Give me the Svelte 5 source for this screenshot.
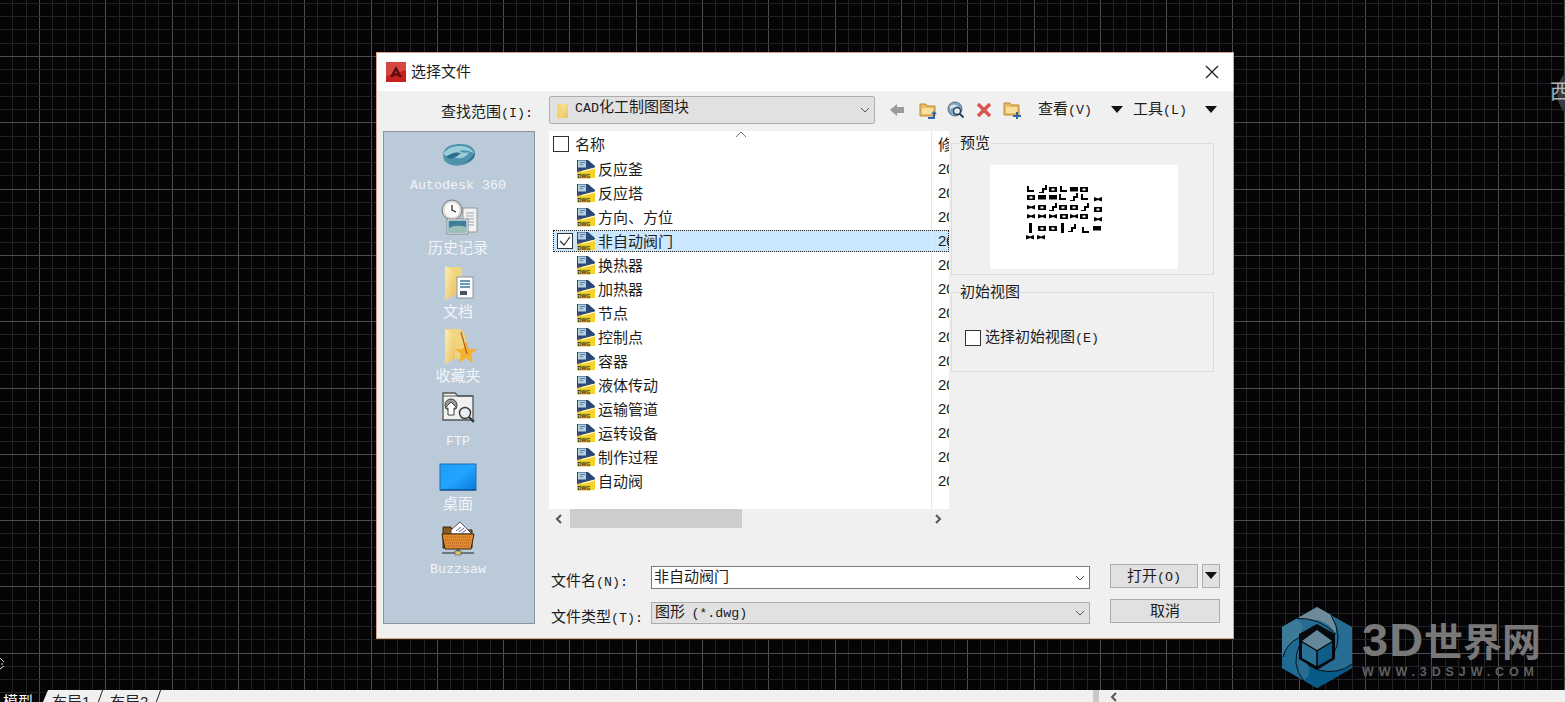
<script>
  const W = 1565;
  const H = 702;
  const STEP = 13.26;

  // cad grid, every 5th line brighter. major lines at x=39, y=56
  const vLines = [];
  for (let i = -2; i * STEP < W; i++) {
    vLines.push({ p: Math.round(39 + i * STEP) + 0.5, major: i % 5 === 0 });
  }
  const hLines = [];
  for (let i = -4; 56 + i * STEP < H; i++) {
    hLines.push({ p: Math.round(56 + i * STEP) + 0.5, major: i % 5 === 0 });
  }

  const files = ['反应釜', '反应塔', '方向、方位', '非自动阀门', '换热器', '加热器', '节点', '控制点', '容器', '液体传动', '运输管道', '运转设备', '制作过程', '自动阀'];

  // little blocks in the dwg preview
  const glyphs = {
    v: (x, y) => `M${x - 4} ${y - 2}l4 1.500l4-1.500v4.500l-4-1.500l-4 1.500z`,
    b: (x, y) => `M${x - 4} ${y - 2}h8v4.500h-8z`,
    o: (x, y) => `M${x - 4} ${y - 2}h8v5h-8zM${x - 1.500} ${y - 0.500}v2h3v-2z`,
    l: (x, y) => `M${x - 4} ${y - 3}h2v4h5v2h-7z`,
    t: (x, y) => `M${x - 1} ${y - 5}h3v10h-3z`,
    r: (x, y) => `M${x - 4} ${y + 3}h3v-4h3v-3h2v5h-3v3h-5z`
  };
  const blocks = [
    ['l', 41, 24], ['r', 53, 24], ['o', 63, 24], ['l', 74, 24], ['b', 84, 24], ['o', 94, 24],
    ['o', 41, 32], ['b', 52, 32], ['b', 63, 32], ['l', 73, 32], ['r', 84, 32], ['l', 95, 32], ['v', 108, 34],
    ['v', 41, 42], ['o', 52, 42], ['r', 63, 42], ['o', 73, 42], ['o', 84, 42], ['r', 95, 42], ['o', 108, 44],
    ['v', 41, 51], ['v', 52, 51], ['v', 63, 51], ['o', 74, 51], ['v', 84, 51], ['o', 94, 51], ['v', 108, 54],
    ['t', 40, 63], ['o', 52, 63], ['o', 63, 63], ['t', 72, 63], ['r', 82, 63], ['l', 96, 65], ['b', 107, 63],
    ['v', 40, 72], ['v', 51, 72]
  ];
  const previewPath = blocks.map(([t, x, y]) => glyphs[t](x, y)).join('');
</script>

<svg width="0" height="0" class="defs" aria-hidden="true">
  <defs>
    <linearGradient id="fold" x1="0" y1="0" x2="1" y2="1">
      <stop offset="0" stop-color="#fdf0b0" />
      <stop offset="1" stop-color="#e8c060" />
    </linearGradient>
    <linearGradient id="desk" x1="0" y1="0" x2="1" y2="1">
      <stop offset="0" stop-color="#1c9cf8" />
      <stop offset="0.5" stop-color="#22a4ff" />
      <stop offset="1" stop-color="#0a78dc" />
    </linearGradient>
    <symbol id="dwg" viewBox="0 0 19 20">
      <path d="M0 1h11l7 6v5L0 14z" fill="#2c4a78" />
      <path d="M1 1.500h8v7H1z" fill="#b4cde0" />
      <path d="M3 3.500h5M3 5.500h3" stroke="#5f7f9c" />
      <path d="M0 13L18 8.500V19H0z" fill="#f6d32a" />
      <path d="M5 12.500L18 9" stroke="#fff" stroke-width="1" />
      <rect x="0" y="14" width="13" height="5.500" fill="#e8c31e" />
      <text x="0.500" y="19" font-size="5.200" font-weight="700" font-family="Liberation Sans, sans-serif" fill="#333">DWG</text>
    </symbol>
    <symbol id="chev" viewBox="0 0 10 6">
      <path d="M1 1l4 4l4-4" fill="none" stroke="#555" stroke-width="1" />
    </symbol>
    <symbol id="tri" viewBox="0 0 12 7">
      <path d="M0 0h12L6 7z" fill="#111" />
    </symbol>
  </defs>
</svg>

<main class="desktop">
  <svg class="grid" width={W} height={H}>
    {#each vLines as l}
      <line x1={l.p} x2={l.p} y1="0" y2={H} stroke={l.major ? '#4c4c4c' : '#232326'} />
    {/each}
    {#each hLines as l}
      <line y1={l.p} y2={l.p} x1="0" x2={W} stroke={l.major ? '#4c4c4c' : '#232326'} />
    {/each}
  </svg>

  <div class="viewcube"><span>西</span></div>
  <svg class="ucs" width="8" height="16"><path d="M0 2l4 4M0 13l4-3M1 8h2" stroke="#ddd" fill="none" /></svg>

  <section class="dialog">
    <header class="titlebar">
      <svg width="20" height="20" viewBox="0 0 20 20">
        <rect width="20" height="20" fill="#c8201f" />
        <path d="M0 0h20v8L0 14z" fill="#e0605a" opacity=".6" />
        <path d="M10 4l6 11h-3.400l-.7-1.600H8.100L7.400 15H4zM10 8.500L8.900 11.500h2.200z" fill="#5c0d0d" fill-rule="evenodd" />
      </svg>
      <h1>选择文件</h1>
      <svg class="close" width="14" height="14" viewBox="0 0 14 14"><path d="M1 1l12 12M13 1L1 13" stroke="#222" stroke-width="1.300" /></svg>
    </header>

    <div class="lookin">
      <label class="lookin-label">查找范围<span class="lat">(I):</span></label>
      <div class="combo top">
        <svg width="13" height="17" viewBox="0 0 13 17"><path d="M1 2l5-1v1h6v14H5l-4 1z" fill="url(#fold)" /><path d="M1 2l5 1v13l-5 1z" fill="#f6d56e" /></svg>
        <span class="combo-text"><span class="lat">CAD</span>化工制图图块</span>
        <svg class="chev" width="10" height="6"><use href="#chev" /></svg>
      </div>
      <div class="tools">
        <svg width="16" height="14" viewBox="0 0 16 14"><path d="M1 7l7-6v3h7v6H8v3z" fill="#9b9b9b" /></svg>
        <svg width="18" height="18" viewBox="0 0 18 18"><path d="M1 3h6l1 2h8v10H1z" fill="#e9bb62" stroke="#b98b3a" /><path d="M3 7h11v6H3z" fill="#f7df9e" /><path d="M9 16h5v-3h-2l3-3l3 3h-2v5H9z" fill="#2f64a8" /></svg>
        <svg width="18" height="18" viewBox="0 0 18 18"><circle cx="8" cy="8" r="7" fill="#7ea6bd" stroke="#56707f" /><path d="M3 5q4-3 8 0q-1 3-4 2t-4 3z" fill="#d8e4ea" /><circle cx="10" cy="10" r="3.500" fill="#e8f0f4" stroke="#253e63" stroke-width="1.400" /><path d="M12.500 12.500l4 4" stroke="#253e63" stroke-width="2" /></svg>
        <svg width="16" height="16" viewBox="0 0 16 16"><path d="M2 2l12 12M14 2L2 14" stroke="#d9534f" stroke-width="3.400" /></svg>
        <svg width="18" height="18" viewBox="0 0 18 18"><path d="M1 2h6l1 2h8v10H1z" fill="#e9bb62" stroke="#b98b3a" /><path d="M3 6h11v6H3z" fill="#f7df9e" /><path d="M13 11h2v3h3v2h-3v2h-2v-2h-3v-2h3z" fill="#2f64a8" /></svg>
        <span class="tool-text">查看<span class="lat">(V)</span></span>
        <svg width="12" height="7"><use href="#tri" /></svg>
        <span class="tool-text">工具<span class="lat">(L)</span></span>
        <svg width="12" height="7"><use href="#tri" /></svg>
      </div>
    </div>

    <div class="body">
      <nav class="places">
        <div class="place">
          <svg width="40" height="40" viewBox="0 0 40 40">
            <path d="M5 20q1-10 15-11q14-1 17 8q1 8-9 12q-12 4-19-1q-4-3-4-8z" fill="#4f93ac" />
            <path d="M5 19q6-9 19-8q9 1 12 7q-8-4-15-2q5 3 10 1q-3 7-12 6q-9-1-14-4z" fill="#9accda" />
            <path d="M8 22q7-6 15-4q-3 3-7 5t-8-1z" fill="#2c6f8c" />
            <path d="M20 29q11-1 17-11q0 9-17 11z" fill="#2c6f8c" />
          </svg>
          <span class="lat">Autodesk 360</span>
        </div>
        <div class="place">
          <svg width="40" height="40" viewBox="0 0 40 40">
            <rect x="25" y="9" width="14" height="24" fill="#f2f2f2" stroke="#999" />
            <path d="M28 14h8M28 17h8M28 20h8M28 23h8M28 26h8" stroke="#9aa" />
            <circle cx="14" cy="11" r="10" fill="#d9d9d9" stroke="#777" />
            <circle cx="14" cy="11" r="7.500" fill="#fafafa" />
            <path d="M14 6v5l4 2" fill="none" stroke="#333" stroke-width="1.300" />
            <rect x="9" y="20" width="21" height="15" fill="#fff" stroke="#888" />
            <rect x="10.500" y="21.500" width="18" height="12" fill="#3f7d9c" />
            <path d="M10.500 29q8-4 18-1v5.500h-18z" fill="#9cc0b8" />
          </svg>
          <span>历史记录</span>
        </div>
        <div class="place">
          <svg width="40" height="40" viewBox="0 0 40 40">
            <path d="M7 4h16l1 3v22H7z" fill="#f0d47e" />
            <path d="M7 3l10 5v24l-10 5z" fill="url(#fold)" />
            <rect x="19" y="14" width="16" height="21" fill="#fff" stroke="#8a949c" />
            <path d="M22 18h10M22 21h10M22 24h10" stroke="#3c7a9c" stroke-width="1.400" />
            <path d="M22 28h7v4h-7z" fill="#456" />
          </svg>
          <span>文档</span>
        </div>
        <div class="place">
          <svg width="40" height="40" viewBox="0 0 40 40">
            <path d="M7 2h16l4 6l4 24H7z" fill="#f0d47e" />
            <path d="M7 2l10 5v25l-10 5z" fill="url(#fold)" />
            <path d="M28 14l3 8h8l-6 5l2 9l-7-5l-7 5l2-9l-6-5h8z" fill="#f3b32f" />
            <path d="M23 5l6 22" stroke="#b35a26" stroke-width="1.200" />
          </svg>
          <span>收藏夹</span>
        </div>
        <div class="place">
          <svg width="40" height="40" viewBox="0 -2 40 40">
            <path d="M5 0h12l3 3h15v24H5z" fill="#eef0f2" stroke="#555" stroke-width="1.300" />
            <path d="M5 3h30" stroke="#555" />
            <circle cx="13" cy="12" r="6" fill="#999" stroke="#444" />
            <path d="M13 9l6 6h-3v7h-6v-7H7z" fill="#fff" stroke="#444" />
            <circle cx="27" cy="20" r="5.500" fill="#e7eef4" stroke="#333" stroke-width="1.400" />
            <path d="M31 24l5 5" stroke="#333" stroke-width="2.200" />
          </svg>
          <span class="lat">FTP</span>
        </div>
        <div class="place">
          <svg width="40" height="40" viewBox="0 0 40 40">
            <rect x="2" y="9" width="36" height="26" fill="url(#desk)" stroke="#1d6eb4" />
            <path d="M2 35h36" stroke="#0a3f7c" />
          </svg>
          <span>桌面</span>
        </div>
        <div class="place">
          <svg width="40" height="40" viewBox="0 0 40 40">
            <path d="M5 8h8l1 3h20v18H5z" fill="#8a5a20" stroke="#3c2408" />
            <path d="M13 11l9-8l12 12H13z" fill="#fff" stroke="#555" />
            <path d="M18 12l5-4M21 13l5-4M24 14l4-3" stroke="#66a" />
            <path d="M4 15h32l-3 15H7z" fill="#e08a32" stroke="#3c2408" />
            <path d="M7 18h26M7 21h26M8 24h24M8 27h24" stroke="#a85c1a" stroke-dasharray="1 1" />
            <path d="M20 30v3" stroke="#555" stroke-width="3" />
            <path d="M4 34h32" stroke="#222" />
            <rect x="17" y="32" width="6" height="4" fill="#d8c860" stroke="#555" stroke-width=".6" />
          </svg>
          <span class="lat">Buzzsaw</span>
        </div>
      </nav>

      <div class="main">
        <div class="browser">
          <div class="list">
            <i class="divider"></i>
            <svg class="sort" width="10" height="5"><path d="M0 5l5-5l5 5" fill="none" stroke="#777" /></svg>
            <div class="head">
              <span class="box"></span>
              <span>名称</span>
              <span class="date">修</span>
            </div>
            {#each files as name, i}
              <div class="row" class:selected={i === 3}>
                <span class="slot">
                  {#if i === 3}
                    <span class="box">
                      <svg width="14" height="14" viewBox="0 0 14 14"><path d="M2 7l4 4l6-8" fill="none" stroke="#333" stroke-width="1.200" /></svg>
                    </span>
                  {/if}
                </span>
                <svg width="19" height="20"><use href="#dwg" /></svg>
                <span class="name">{name}</span>
                <span class="date">20</span>
              </div>
            {/each}
          </div>

          <aside class="side">
            <fieldset class="group preview">
              <legend>预览</legend>
              <div class="thumb">
                <svg width="188" height="104"><path d={previewPath} fill="#000" fill-rule="evenodd" /></svg>
              </div>
            </fieldset>
            <fieldset class="group initial">
              <legend>初始视图</legend>
              <label class="check"><span class="box"></span><span>选择初始视图<span class="lat">(E)</span></span></label>
            </fieldset>
          </aside>
        </div>

        <div class="hscroll">
          <svg class="arrow" width="8" height="10"><path d="M6 1L2 5l4 4" fill="none" stroke="#555" stroke-width="2" /></svg>
          <div class="track"><div class="thumbbar"></div></div>
          <svg class="arrow" width="8" height="10"><path d="M2 1l4 4l-4 4" fill="none" stroke="#555" stroke-width="2" /></svg>
        </div>

        <div class="form">
          <label class="flabel">文件名<span class="lat">(N):</span></label>
          <div class="field">
            <span>非自动阀门</span>
            <svg class="chev" width="10" height="6"><use href="#chev" /></svg>
          </div>
          <div class="open-wrap">
            <button class="btn open">打开<span class="lat">(O)</span></button>
            <button class="btn drop" aria-label="打开选项"><svg width="12" height="7"><use href="#tri" /></svg></button>
          </div>

          <label class="flabel">文件类型<span class="lat">(T):</span></label>
          <div class="field gray">
            <span>图形 <span class="lat">(*.dwg)</span></span>
            <svg class="chev" width="10" height="6"><use href="#chev" /></svg>
          </div>
          <button class="btn cancel">取消</button>
        </div>
      </div>
    </div>
  </section>

  <div class="watermark">
    <svg width="70" height="81" viewBox="0 0 70 81">
      <path d="M35 0l35 20v41L35 81L0 61V20z" fill="#276c92" />
      <path d="M35 0L49 8Q55 18 54 27Q46 15 36 13Q25 12 15 11.500z" fill="#6f8b9b" />
      <path d="M0 20L15 11.500L21 19L18 30Q6 33 1 50H0z" fill="#3d7a98" />
      <path d="M0 50Q4 37 18 30V53Q14 65 22 73.500L0 61z" fill="#1f6a90" />
      <path d="M70 57V61L35 81L22 73.500Q30 68 26 58Q30 62 36 63Q56 68 70 57z" fill="#075a88" />
      <path d="M15 11.500Q36 10 54 27M49 8Q62 30 51 48M70 57Q56 68 36 63L26 58M22 74Q8 58 18 37M1 50Q4 37 18 30" fill="none" stroke="#05101a" stroke-width="1" />
      <path d="M35 17l18 10v25L35 63L17 52V27z" fill="#05090d" />
      <path d="M35 23l15 11l-15 9l-15-9z" fill="#64889a" />
      <path d="M20 35.500l14.200 8.500v15L20 51z" fill="#2a7396" />
      <path d="M50 35.500l-14.200 8.500v15L50 51z" fill="#0f5c88" />
    </svg>
    <div class="mark-text">
      <strong><span class="mark-latin">3D</span>世界网</strong>
      <small>WWW.3DSJW.COM</small>
    </div>
  </div>

  <footer class="tabs">
    <span class="tab model">模型</span>
    <div class="tabstrip">
      <span class="tab">布局<span>1</span></span><i class="slash"></i>
      <span class="tab">布局<span>2</span></span><i class="slash"></i>
      <i class="grip"></i>
      <svg class="arrow" width="8" height="10"><path d="M6 1L2 5l4 4" fill="none" stroke="#555" stroke-width="2" /></svg>
    </div>
  </footer>
</main>

<style>
  :global(body) {
    margin: 0;
    background: #050507;
    overflow: hidden;
  }

  .defs { position: absolute; }

  .desktop {
    position: relative;
    width: 1565px;
    height: 702px;
    overflow: hidden;
    background: #050507;
    font-family: "Noto Sans CJK SC", sans-serif;
    font-size: 15px;
    color: #1c1c1c;
  }

  .lat {
    font-family: "Liberation Mono", monospace;
    font-size: 13.33px;
  }

  .grid { position: absolute; left: 0; top: 0; }

  .viewcube {
    position: absolute;
    left: 1557px;
    top: 58px;
    width: 90px;
    height: 70px;
    border-radius: 50%;
    background: #3a3a3e;
  }
  .viewcube span {
    position: absolute;
    left: -7px;
    top: 21px;
    color: #b5b5b5;
    font-size: 20px;
    line-height: 24px;
  }

  .ucs { position: absolute; left: 0; top: 656px; }

  /* dialog */
  .dialog {
    position: absolute;
    left: 376px;
    top: 52px;
    width: 858px;
    height: 587px;
    box-sizing: border-box;
    border: 1px solid #d9a27e;
    background: #f0f0f0;
    display: flex;
    flex-direction: column;
  }

  .titlebar {
    height: 38px;
    flex: none;
    background: #fff;
    display: flex;
    align-items: center;
    padding: 0 14px 0 9px;
    gap: 5px;
  }
  .titlebar h1 {
    margin: -2px 0 0;
    font-size: 15px;
    font-weight: 400;
    line-height: 20px;
  }
  .close { margin-left: auto; }

  .lookin {
    height: 40px;
    flex: none;
    display: flex;
    align-items: flex-start;
  }
  .lookin-label {
    width: 156px;
    text-align: right;
    margin-top: 10px;
    margin-right: 1px;
    line-height: 20px;
    white-space: nowrap;
  }
  .combo.top {
    width: 326px;
    height: 28px;
    margin: 5px 0 0 15px;
    box-sizing: border-box;
    background: #e1e1e1;
    border: 1px solid #adadad;
    border-radius: 2px;
    display: flex;
    align-items: center;
    padding: 0 4px 0 6px;
    gap: 6px;
  }
  .combo-text { line-height: 20px; margin-top: -5px; }
  .chev { margin-left: auto; flex: none; }

  .tools {
    margin: 7px 0 0 14px;
    height: 18px;
    display: grid;
    grid-template-columns: 30px 28px 29px 27px 35px 73px 22px 72px 20px;
    align-items: center;
    white-space: nowrap;
  }
  .tool-text { line-height: 20px; }

  .body {
    flex: 1;
    min-height: 0;
    display: flex;
    padding-left: 6px;
    gap: 14px;
  }

  /* left bar */
  .places {
    width: 152px;
    height: 493px;
    box-sizing: border-box;
    flex: none;
    border: 1px solid #8d959c;
    background: #bacad9;
    padding: 3px 2px 0 0;
    display: flex;
    flex-direction: column;
    color: #f2f5f8;
  }
  .place {
    height: 64px;
    flex: none;
    display: flex;
    flex-direction: column;
    align-items: center;
    line-height: 18px;
    white-space: nowrap;
  }
  .place svg { flex: none; }
  .place span { margin-top: -1px; }
  .place .lat { margin-top: 2px; }

  /* file list */
  .main { flex: 1; min-width: 0; }

  .browser { display: flex; height: 378px; }

  .list {
    position: relative;
    width: 400px;
    flex: none;
    background: #fff;
    overflow: hidden;
  }
  .divider {
    position: absolute;
    left: 382px;
    top: 0;
    bottom: 0;
    width: 1px;
    background: #e6e6e6;
  }
  .sort { position: absolute; left: 187px; top: 1px; }

  .head {
    height: 26px;
    display: flex;
    align-items: center;
    padding-left: 4px;
    gap: 6px;
    line-height: 20px;
  }
  .head .date { margin-left: auto; }

  .date {
    width: 11px;
    overflow: hidden;
    white-space: nowrap;
    flex: none;
    font-family: "Liberation Sans", sans-serif;
    line-height: 20px;
  }
  .head .date { font-family: inherit; }

  .box {
    width: 16px;
    height: 16px;
    box-sizing: border-box;
    flex: none;
    border: 1px solid #333;
    background: #fff;
    display: inline-flex;
    align-items: center;
    justify-content: center;
  }

  .row {
    height: 24px;
    margin-left: 4px;
    box-sizing: border-box;
    display: flex;
    align-items: center;
    line-height: 20px;
  }
  .row.selected {
    height: 22px;
    margin-top: 1px;
    margin-bottom: 1px;
    background: #cce8ff;
    outline: 1px dotted #222;
    outline-offset: -1px;
  }
  .slot {
    width: 24px;
    flex: none;
    padding-left: 4px;
    box-sizing: border-box;
    display: flex;
  }
  .name { margin-left: 2px; flex: 1; white-space: nowrap; }

  /* preview side */
  .side {
    flex: 1;
    padding: 2px 19px 0 2px;
    display: flex;
    flex-direction: column;
    gap: 7px;
    background: #f0f0f0;
  }
  .group {
    margin: 0;
    padding: 0;
    min-width: 0;
    border: 1px solid #dcdcdc;
    box-sizing: border-box;
  }
  .group legend {
    margin-left: 7px;
    padding: 0 1px;
    line-height: 20px;
    font-size: 15px;
    position: relative;
    top: -1px;
  }
  .preview { height: 142px; }
  .thumb {
    margin: 12px 0 0 38px;
    width: 188px;
    height: 104px;
    background: #fff;
  }
  .thumb svg { display: block; }
  .initial { height: 90px; }
  .check {
    display: flex;
    align-items: center;
    gap: 4px;
    margin: 24px 0 0 13px;
    line-height: 20px;
  }

  /* scrollbar */
  .hscroll {
    height: 19px;
    width: 400px;
    display: flex;
    align-items: center;
  }
  .arrow { flex: none; }
  .hscroll .arrow { margin: 0 6px; }
  .track { flex: 1; height: 100%; display: flex; margin-left: 1px; }
  .thumbbar { width: 172px; height: 100%; background: #cdcdcd; }
  .hscroll .arrow:last-child { margin: 0 7px 0 5px; }

  /* bottom form */
  .form {
    margin: 38px 0 0 2px;
    display: grid;
    grid-template-columns: 100px 439px 110px;
    grid-template-rows: 23px 22px;
    column-gap: 0;
    row-gap: 13px;
  }
  .flabel {
    line-height: 20px;
    margin-top: 4px;
    white-space: nowrap;
  }
  .field {
    box-sizing: border-box;
    height: 100%;
    border: 1px solid #7a7a7a;
    background: #fff;
    display: flex;
    align-items: center;
    padding: 0 4px 0 2px;
    line-height: 18px;
  }
  .field span { margin-top: -3px; }
  .field .lat { margin: 0; }
  .field.gray { background: #e1e1e1; border-color: #adadad; padding-left: 3px; }
  .field.gray span { margin-top: -1px; word-spacing: 3px; }
  .field.gray .lat { margin: 0; }

  .open-wrap {
    grid-column: 3;
    margin: -2px 0 0 20px;
    display: flex;
    justify-content: space-between;
    width: 110px;
    height: 24px;
  }
  .btn {
    box-sizing: border-box;
    background: #e1e1e1;
    border: 1px solid #adadad;
    border-radius: 0;
    padding: 0 0 2px;
    font: inherit;
    line-height: 20px;
    color: inherit;
  }
  .open { width: 88px; height: 24px; }
  .drop { width: 18px; height: 24px; display: flex; align-items: center; justify-content: center; }
  .cancel {
    width: 110px;
    height: 24px;
    margin: -3px 0 0 20px;
  }

  /* watermark over the drawing */
  .watermark {
    position: absolute;
    left: 1282px;
    top: 607px;
    display: flex;
    gap: 10px;
  }
  .mark-text {
    display: flex;
    flex-direction: column;
    padding-top: 10px;
  }
  .mark-text strong {
    font-size: 39px;
    line-height: 44px;
    color: #787878;
    font-weight: 700;
    white-space: nowrap;
  }
  .mark-latin {
    font-family: "Liberation Sans", sans-serif;
    font-size: 47px;
    letter-spacing: 1px;
  }
  .mark-text small {
    font-family: "Liberation Sans", sans-serif;
    font-size: 12.5px;
    font-weight: 700;
    letter-spacing: 4.9px;
    line-height: 16px;
    color: #5f5f5f;
    white-space: nowrap;
    margin-top: 2px;
  }

  /* layout tabs at the bottom */
  .tabs {
    position: absolute;
    left: 0;
    right: 0;
    bottom: 0;
    height: 12px;
    display: flex;
    line-height: 22px;
    overflow: hidden;
  }
  .tab { white-space: nowrap; }
  .tab.model { color: #fff; width: 43px; padding-left: 3px; box-sizing: border-box; flex: none; font-size: 15px; }
  .tabstrip {
    flex: 1;
    background: #f0f0f0;
    display: flex;
    align-items: flex-start;
    clip-path: polygon(5px 0, 100% 0, 100% 100%, 0 100%);
  }
  .tabstrip .tab {
    width: 57px;
    padding-left: 9px;
    box-sizing: border-box;
    font-size: 15px;
    color: #222;
  }
  .tabstrip .tab span { font-family: "Liberation Sans", sans-serif; }
  .slash {
    width: 1px;
    height: 12px;
    flex: none;
    background: #222;
    transform: skewX(-20deg);
  }
  .grip {
    width: 6px;
    height: 12px;
    flex: none;
    background: #c8c8c8;
    margin-left: 934px;
  }
  .tabstrip .arrow { margin: 2px 0 0 11px; }
</style>
